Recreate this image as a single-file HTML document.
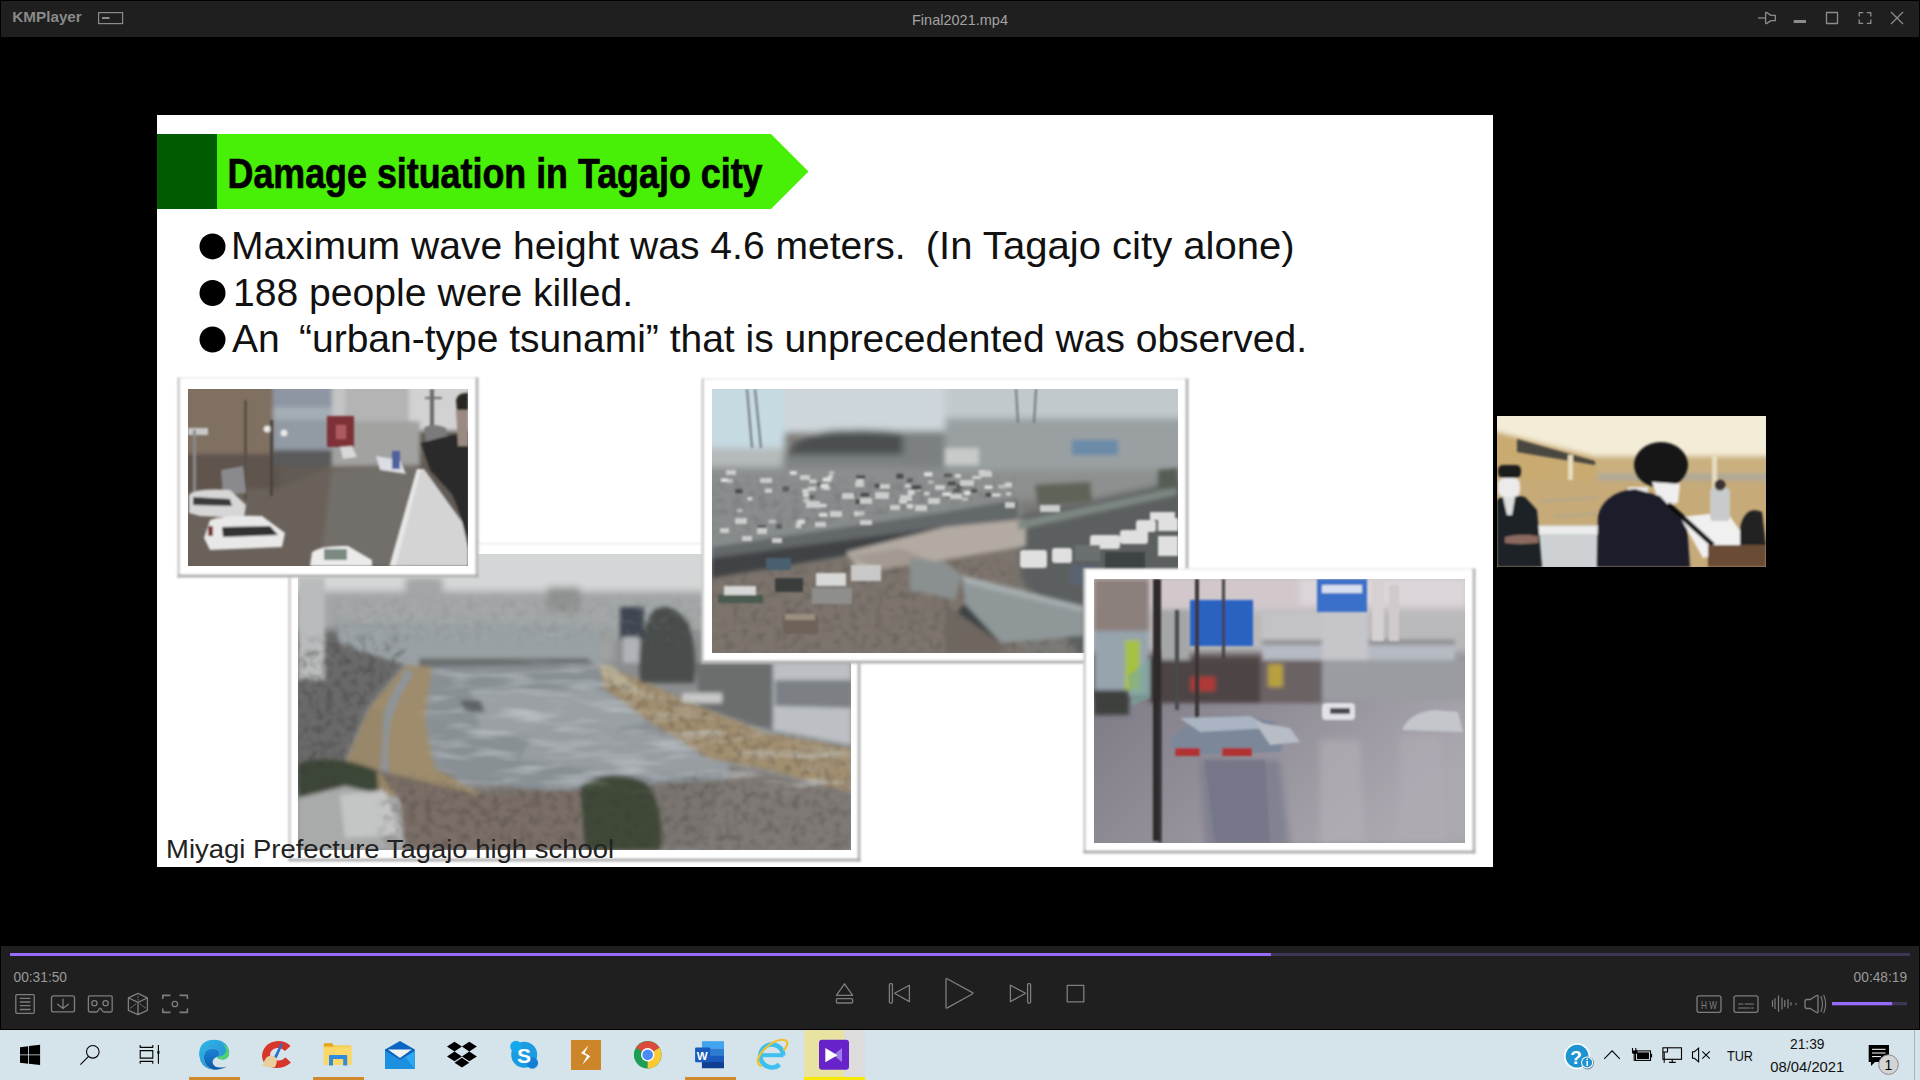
<!DOCTYPE html>
<html><head><meta charset="utf-8">
<style>
*{margin:0;padding:0;box-sizing:border-box}
html,body{width:1920px;height:1080px;overflow:hidden;background:#000;font-family:"Liberation Sans",sans-serif}
.a{position:absolute}
#titlebar{left:1px;top:1px;width:1918px;height:36px;background:#1f1f1f}
#ctrl{left:1px;top:946px;width:1918px;height:83px;background:#1f1f1f}
#task{left:0;top:1030px;width:1920px;height:50px;background:#d5e4ea}
#slide{left:157px;top:115px;width:1336px;height:752px;background:#fff;overflow:hidden}

</style></head>
<body>
<!-- title bar -->
<div id="titlebar" class="a"></div>
<svg class="a" style="left:0;top:0" width="1920" height="37">
<text x="12.3" y="22" font-family="Liberation Sans" font-weight="bold" font-size="15" fill="#8a8a8a" textLength="69.5" lengthAdjust="spacingAndGlyphs">KMPlayer</text>
<rect x="98.6" y="12.6" width="24" height="11" fill="none" stroke="#8a8a8a" stroke-width="1.2"/>
<rect x="102" y="17" width="7.5" height="2" fill="#8a8a8a"/>
<text x="912" y="25" font-family="Liberation Sans" font-size="14.5" fill="#a3a3a3" textLength="96" lengthAdjust="spacingAndGlyphs">Final2021.mp4</text>
<g fill="none" stroke="#8c8c8c" stroke-width="1.3" stroke-linejoin="round">
<path d="M1758,18 H1765.2"/>
<path d="M1765.6,13.2 Q1765.6,12 1766.8,12.6 L1771,15.4 H1775.3 V20.6 H1771 L1766.8,23.4 Q1765.6,24 1765.6,22.8 Z"/>
<rect x="1826.5" y="12.5" width="11" height="11"/>
<path d="M1859.2,16.5 V12.6 H1863.2 M1866.8,12.6 H1870.8 V16.5 M1870.8,19.5 V23.4 H1866.8 M1863.2,23.4 H1859.2 V19.5"/>
<path d="M1891,12 L1903,24 M1903,12 L1891,24"/>
</g>
<rect x="1793.7" y="20" width="12.3" height="3" fill="#8c8c8c"/>
</svg>
<!-- slide -->
<div id="slide" class="a">
<svg class="a" style="left:0;top:0" width="1336" height="752" viewBox="0 0 1336 752">
<rect x="0" y="19" width="60" height="75" fill="#005c00"/>
<polygon points="60,19 614,19 651.5,56.5 614,94 60,94" fill="#48ef06"/>
<text id="ttl" x="70.5" y="73.4" font-family="Liberation Sans" font-weight="bold" font-size="42" fill="#000" stroke="#000" stroke-width="0.7" textLength="535" lengthAdjust="spacingAndGlyphs">Damage situation in Tagajo city</text>
<circle cx="55.5" cy="131.4" r="13" fill="#000"/>
<circle cx="55.5" cy="178" r="13" fill="#000"/>
<circle cx="55.5" cy="224.5" r="13" fill="#000"/>
<g font-family="Liberation Sans" font-size="39" fill="#111">
<text id="l1a" x="74" y="144.3" textLength="674.6" lengthAdjust="spacingAndGlyphs">Maximum wave height was 4.6 meters.</text>
<text id="l1b" x="768.7" y="144.3" textLength="369" lengthAdjust="spacingAndGlyphs">(In Tagajo city alone)</text>
<text id="l2" x="76" y="191" textLength="400" lengthAdjust="spacingAndGlyphs">188 people were killed.</text>
<text id="l3a" x="75" y="237">An</text><text id="l3b" x="142" y="237" textLength="1008" lengthAdjust="spacingAndGlyphs">“urban-type tsunami” that is unprecedented was observed.</text>
</g>
</svg>
</div>

<!-- PHOTOLAYER -->
<svg class="a" style="left:157px;top:115px" width="1336" height="752" viewBox="157 115 1336 752">
<defs>
<filter id="fb" x="-5%" y="-5%" width="110%" height="110%"><feGaussianBlur stdDeviation="0.8"/></filter>
<filter id="b1" x="-20%" y="-20%" width="140%" height="140%"><feGaussianBlur stdDeviation="1"/></filter>
<filter id="b2" x="-20%" y="-20%" width="140%" height="140%"><feGaussianBlur stdDeviation="2"/></filter>
<filter id="b3" x="-20%" y="-20%" width="140%" height="140%"><feGaussianBlur stdDeviation="3.5"/></filter>
<filter id="texd" x="-10%" y="-10%" width="120%" height="120%" color-interpolation-filters="sRGB"><feTurbulence type="fractalNoise" baseFrequency="0.12" numOctaves="3" seed="4" result="n"/><feColorMatrix in="n" type="matrix" values="0 0 0 0 0.2  0 0 0 0 0.19  0 0 0 0 0.18  -1.0 0 0 0 0.56" result="c"/><feGaussianBlur in="SourceAlpha" stdDeviation="5" result="m"/><feComposite in="c" in2="m" operator="in"/><feGaussianBlur stdDeviation="1.1"/></filter>
<filter id="texl" x="-10%" y="-10%" width="120%" height="120%" color-interpolation-filters="sRGB"><feTurbulence type="fractalNoise" baseFrequency="0.02 0.1" numOctaves="2" seed="7" result="n"/><feColorMatrix in="n" type="matrix" values="0 0 0 0 0.8  0 0 0 0 0.82  0 0 0 0 0.84  1.6 0 0 0 -0.75" result="c"/><feGaussianBlur in="SourceAlpha" stdDeviation="6" result="m"/><feComposite in="c" in2="m" operator="in"/><feGaussianBlur stdDeviation="1.2"/></filter>
<filter id="texm" x="-10%" y="-10%" width="120%" height="120%" color-interpolation-filters="sRGB"><feTurbulence type="fractalNoise" baseFrequency="0.16" numOctaves="3" seed="11" result="n"/><feColorMatrix in="n" type="matrix" values="0 0 0 0 0.85  0 0 0 0 0.85  0 0 0 0 0.85  1.0 0 0 0 -0.5" result="c"/><feGaussianBlur in="SourceAlpha" stdDeviation="5" result="m"/><feComposite in="c" in2="m" operator="in"/><feGaussianBlur stdDeviation="1.1"/></filter>
<clipPath id="c1"><rect x="188" y="389" width="280" height="177"/></clipPath>
<clipPath id="c2"><rect x="298" y="554" width="553" height="296"/></clipPath>
<clipPath id="c3"><rect x="712" y="389" width="466" height="264"/></clipPath>
<clipPath id="c4"><rect x="1094" y="579" width="371" height="264"/></clipPath>
</defs>
<!-- frame 2 -->
<g filter="url(#fb)">
<rect x="288.5" y="543" width="572.0" height="318.5" fill="#fff"/>
<rect x="288.5" y="543" width="572.0" height="1.2" fill="#e4e4e4"/>
<rect x="288.5" y="543" width="2.2" height="318.5" fill="#c2c2c2"/>
<rect x="857.5" y="543" width="3" height="318.5" fill="#b6b6b6"/>
<rect x="288.5" y="858.5" width="572.0" height="3" fill="#aeaeae"/>
</g>
<g clip-path="url(#c2)">
<rect x="298" y="554" width="553" height="296" fill="#8e9294"/>
<g filter="url(#b3)">
<rect x="290" y="548" width="570" height="48" fill="#d4d7d7"/>
<rect x="290" y="591" width="570" height="40" fill="#a2a6a6"/>
<rect x="405" y="577" width="38" height="37" fill="#a3a6a6"/>
<rect x="547" y="587" width="33" height="25" fill="#909292"/>
<path d="M335,623 L600,625 L700,640 L700,662 L335,662 Z" fill="#9da1a1"/>
<path d="M290,629 L420,630 L405,665 L369,708 L348,756 L340,790 L290,790 Z" fill="#6a6b6b"/>
<path d="M615,640 L851,640 L851,745 L730,721 L615,690 Z" fill="#8b8d8f"/>
<path d="M420,850 L420,770 L560,790 L720,760 L851,800 L851,850 Z" fill="#7a7470"/>
</g>
<g filter="url(#b2)">
<rect x="298" y="577" width="27" height="103" fill="#b9bcbc"/>
<path d="M335,625 L600,626 L600,667 L432,667 L406,665 L340,645 Z" fill="#9aa1a4"/>
<path d="M419,658 L586,658 L600,667 L419,667 Z" fill="#6c6e70"/>
<path d="M430,667 L600,664 L620,690 L730,722 L851,752 L851,800 L720,780 L560,790 L460,784 L433,755 L425,712 Z" fill="#899094"/>
<path d="M470,690 L600,690 L660,720 L560,740 L480,730 Z" fill="#9aa0a4"/>
<path d="M540,720 L700,740 L760,770 L640,775 L520,760 Z" fill="#979da1"/>
<path d="M460,700 L480,700 L485,712 L465,712 Z" fill="#5e6468"/>
<path d="M405.6,665 L432,667 L425,720 L434.5,768.5 L480,793 L480,800 L377,795 L340.6,786 L347.8,756.5 L369.5,708 Z" fill="#9e8c6c"/>
<path d="M410,671 Q392,700 386.5,720 Q382,748 384.5,770 Q390,785 405,793" fill="none" stroke="#8c949c" stroke-width="8"/>
<path d="M369.5,708 L384,712 L381,770 L347.8,762 Z" fill="#988769"/>
<path d="M600,664 L640,680 L700,707 L767,733 L851,748 L851,792 L767,770 L708,758 L650,722 L604,688 Z" fill="#a28f6f"/>
<path d="M600,664 L612,666 L640,690 L660,700 L625,692 L602,676 Z" fill="#b9ae94"/>
<path d="M773,663 L851,663 L851,745 L773,730 Z" fill="#bcc0c4"/><path d="M695,663 L773,663 L773,732 L700,706 Z" fill="#6c6e6e"/>
<path d="M775,680 L851,680 L851,708 L775,706 Z" fill="#7c8084"/><rect x="682" y="693" width="40" height="10" fill="#c8c8c8"/>
<rect x="620" y="607" width="24" height="33" fill="#3f4652"/>
<path d="M640,683 Q636,640 652,612 Q668,598 688,622 Q698,650 694,683 Z" fill="#4a4e4c"/><rect x="623" y="637" width="16" height="26" fill="#b0b4b8"/>
<path d="M298,764 Q330,752 377,770 L380,807 L298,810 Z" fill="#3c4637"/>
<path d="M298,798 L345,786 L405.6,800 L405.6,850 L298,850 Z" fill="#a9aaaa"/>
<path d="M340,795 L385,790 L400,835 L345,838 Z" fill="#c4c5c5"/>
<path d="M377,770 L480,795 L580,790 L580,850 L405,850 L400,800 Z" fill="#7a6e66"/>
<path d="M730,765 L851,792 L851,850 L700,850 Z" fill="#807a76"/>
<path d="M580,785 Q612,768 645,782 Q665,805 660,850 L585,850 Z" fill="#3f4a39"/>
</g>
<path d="M430,667 L600,664 L620,690 L730,722 L851,752 L851,800 L720,780 L560,790 L460,784 L433,755 L425,712 Z" fill="#fff" filter="url(#texl)"/>
<rect x="330" y="598" width="521" height="44" fill="#000" filter="url(#texd)" opacity="0.2"/>
<rect x="330" y="598" width="521" height="44" fill="#fff" filter="url(#texm)" opacity="0.3"/>
<path d="M298,640 L410,640 L400,665 L365,708 L345,756 L338,785 L298,785 Z" fill="#000" filter="url(#texd)"/>
<path d="M380,775 L560,790 L720,775 L851,795 L851,850 L380,850 Z" fill="#000" filter="url(#texd)" opacity="0.75"/>
<path d="M600,668 L700,707 L767,733 L851,748 L851,792 L767,770 L708,758 L650,722 L604,688 Z" fill="#000" filter="url(#texd)" opacity="0.7"/>

</g>
<!-- frame 1 -->
<g filter="url(#fb)">
<rect x="177.5" y="377.5" width="301.0" height="200.0" fill="#fff"/>
<rect x="177.5" y="377.5" width="301.0" height="1.2" fill="#e4e4e4"/>
<rect x="177.5" y="377.5" width="2.2" height="200.0" fill="#c2c2c2"/>
<rect x="475.5" y="377.5" width="3" height="200.0" fill="#b6b6b6"/>
<rect x="177.5" y="574.5" width="301.0" height="3" fill="#aeaeae"/>
</g>
<g clip-path="url(#c1)">
<rect x="188" y="389" width="280" height="177" fill="#625b55"/>
<g filter="url(#b2)">
<rect x="330" y="385" width="140" height="40" fill="#c4c4c4"/>
<rect x="345" y="385" width="64" height="44" fill="#b4b4b4"/>
<rect x="409" y="385" width="60" height="46" fill="#d2d2d2"/>
<rect x="330" y="421" width="90" height="48" fill="#a2a2a0"/>
<rect x="185" y="385" width="88" height="75" fill="#807062"/>
<rect x="185" y="454" width="95" height="37" fill="#5f554e"/>
<rect x="273" y="385" width="59" height="22" fill="#8e96a4"/>
<rect x="273" y="407" width="59" height="13" fill="#a4acb4"/>
<rect x="273" y="420" width="59" height="33" fill="#929aa4"/>
<rect x="273" y="450" width="59" height="16" fill="#5a5a5a"/>
<path d="M188,491 L280,488 L332,466 L420,465 L412,566 L188,566 Z" fill="#6a625a"/>
<path d="M332,470 L420,465 L408,566 L320,566 Z" fill="#726e69"/>
</g>
<g filter="url(#b1)">
<rect x="327" y="416" width="27" height="31" fill="#7e3038"/>
<rect x="336" y="425" width="10" height="14" fill="#b05a60"/>
<rect x="270" y="420" width="3" height="76" fill="#4a4440"/>
<rect x="244" y="400" width="3" height="100" fill="#5a504a"/>
<circle cx="267" cy="429" r="3.5" fill="#e8e8e8"/><circle cx="284" cy="433" r="3.5" fill="#e8e8e8"/>
<rect x="188" y="428" width="20" height="7" fill="#c8c8c8"/>
<rect x="193" y="430" width="3" height="75" fill="#8a8a8a"/>
<path d="M221,470 L243,466 L246,493 L223,495 Z" fill="#8a8a8e"/>
<path d="M189,495 Q195,488 230,490 L246,505 L244,518 L200,516 L189,513 Z" fill="#d6d6d6"/>
<path d="M193,497 L230,499 L232,506 L193,505 Z" fill="#3a3a3a"/>
<path d="M210,520 Q225,515 262,516 L285,533 L282,547 L210,550 L204,538 Z" fill="#e8e8e8"/>
<path d="M222,527 L270,526 L278,535 L223,537 Z" fill="#333"/>
<rect x="208" y="526" width="5" height="10" fill="#7a3030"/>
<path d="M312,552 Q322,545 348,546 L372,560 L372,566 L310,566 Z" fill="#ebebeb"/>
<rect x="324" y="549" width="23" height="11" fill="#7a8a80"/>
<path d="M340,447 L352,446 L357,457 L343,459 Z" fill="#d8d8d8"/>
<path d="M376,456 L400,460 L406,474 L380,470 Z" fill="#dcdce4"/>
<rect x="392" y="451" width="8" height="18" fill="#5060a0"/>
<path d="M389.6,566 L417,469 L424,469 L468,530 L468,566 Z" fill="#d4d4d4"/>
<path d="M389.6,566 L417,469 L421,469 L396,566 Z" fill="#e6e6e6"/>
<rect x="430" y="389" width="4" height="50" fill="#6a6a6a"/>
<path d="M425,398 L442,398" stroke="#6a6a6a" stroke-width="2"/>
<path d="M424,428 Q432,422 446,428 L450,456 L428,458 Z" fill="#7a7a7a"/>
<path d="M421,443 Q445,436 468,432 L468,548 Q462,515 452,494 L430,470 Z" fill="#29292c"/>
<path d="M456,400 Q458,392 468,393 L468,412 L457,412 Z" fill="#2a2624"/>
<path d="M456,410 L468,410 L468,446 L458,446 Z" fill="#9a8a82"/>
</g>

</g>
<!-- frame 3 -->
<g filter="url(#fb)">
<rect x="701.5" y="378.5" width="487.0" height="285.0" fill="#fff"/>
<rect x="701.5" y="378.5" width="487.0" height="1.2" fill="#e4e4e4"/>
<rect x="701.5" y="378.5" width="2.2" height="285.0" fill="#c2c2c2"/>
<rect x="1185.5" y="378.5" width="3" height="285.0" fill="#b6b6b6"/>
<rect x="701.5" y="660.5" width="487.0" height="3" fill="#aeaeae"/>
</g>
<g clip-path="url(#c3)">
<rect x="712" y="389" width="466" height="264" fill="#7c7a76"/>
<g filter="url(#b3)">
<rect x="705" y="383" width="480" height="50" fill="#cdd6da"/>
<rect x="705" y="383" width="80" height="65" fill="#c6dae2"/>
<rect x="945" y="383" width="240" height="40" fill="#c2c9cc"/>
<rect x="705" y="448" width="80" height="35" fill="#b5b9b9"/>
<path d="M783,462 Q795,428 850,430 Q900,428 945,440 L945,458 L783,458 Z" fill="#4b4f4f"/><rect x="783" y="455" width="162" height="15" fill="#7e8282"/>
<rect x="903" y="431" width="45" height="35" fill="#7c8080"/>
<rect x="945" y="418" width="240" height="55" fill="#9aa0a2"/>
<path d="M705,467 L945,467 L945,482 L705,482 Z" fill="#8a8e8e"/>
<path d="M705,482 L1020,482 L1020,545 L705,560 Z" fill="#898d8d"/>
<path d="M945,470 L1185,470 L1185,500 L945,500 Z" fill="#8c908e"/>
<path d="M1018,516 L1185,480 L1185,660 L1084,660 L1018,575 Z" fill="#5b5f61"/>
<path d="M705,565 L1020,545 L1020,660 L705,660 Z" fill="#7d756d"/>
</g>
<path d="M712,575 L850,562 L1000,560 L1084,620 L1084,653 L712,653 Z" fill="#000" filter="url(#texd)" opacity="0.6"/>
<path d="M712,480 L1015,480 L1015,500 L712,540 Z" fill="#000" filter="url(#texd)" opacity="0.4"/>
<g filter="url(#b2)">
<path d="M712,543 L944,508 L1018,495 L1018,521 L944,527 L712,562 Z" fill="#64686a"/><path d="M712,543 L944,508 L1018,495 L1018,499 L944,512 L712,547 Z" fill="#8a8e90"/>
<path d="M712,558 L944,527 L1018,522 L1018,530 L850,555 L712,578 Z" fill="#3f4345"/>
<path d="M846,552 L945,527 L1026,519 L1026,546 L944,560 L860,572 Z" fill="#b3aba3"/>
<path d="M850,556 L900,548 L930,560 L880,570 Z" fill="#a39a92"/>
<path d="M1018,521 L1177,487 L1177,495 L1018,530 Z" fill="#7e8882"/>
<path d="M1035,485 L1090,482 L1092,502 L1038,506 Z" fill="#5f6358"/>
<path d="M1158,470 L1178,468 L1178,488 L1158,490 Z" fill="#575d55"/>
<rect x="945" y="448" width="34" height="17" fill="#c8c9c9"/>
<rect x="1072" y="440" width="46" height="15" fill="#6b8aa8"/>
<path d="M962,575 L1084,609 L1084,636 L1001,643 L965,604 Z" fill="#8f9799"/>
<path d="M962,575 L1084,606 L1084,612 L965,583 Z" fill="#a7aeb0"/>
<path d="M965,604 L1001,643 L985,650 L955,615 Z" fill="#3e4244"/>
<path d="M945,604 L1001,643 L1001,653 L945,653 Z" fill="#6e665e"/>
<path d="M910,558 L945,562 L962,575 L955,600 L910,590 Z" fill="#8a9090"/>
</g>
<g filter="url(#b1)">
<path d="M747,389 L752,448 M755,389 L761,448 M1016,389 L1018,423 M1036,389 L1034,423" stroke="#6e767a" stroke-width="2"/>
<g><rect x="899.1" y="498.8" width="7.8" height="4.7" fill="#d8d8d8"/><rect x="907.7" y="489.9" width="6.9" height="4.9" fill="#d8d8d8"/><rect x="906.8" y="503.9" width="6.5" height="4.7" fill="#d4d4d4"/><rect x="827.9" y="475.0" width="5.1" height="3.4" fill="#cfcfcf"/><rect x="798.2" y="519.5" width="6.6" height="4.5" fill="#d8d8d8"/><rect x="737.1" y="509.1" width="5.5" height="3.0" fill="#bfc0c0"/><rect x="972.2" y="475.8" width="8.8" height="3.3" fill="#cfcfcf"/><rect x="764.9" y="488.5" width="7.2" height="4.4" fill="#cfcfcf"/><rect x="776.2" y="523.9" width="5.8" height="4.9" fill="#5a5c5e"/><rect x="828.7" y="471.1" width="5.7" height="3.3" fill="#bfc0c0"/><rect x="735.2" y="489.1" width="7.3" height="4.2" fill="#4a4c4e"/><rect x="924.1" y="472.3" width="8.3" height="4.0" fill="#e0e0e0"/><rect x="808.8" y="495.2" width="5.7" height="3.5" fill="#5a5c5e"/><rect x="992.1" y="493.5" width="8.4" height="3.0" fill="#e0e0e0"/><rect x="947.6" y="481.5" width="8.4" height="3.9" fill="#4a4c4e"/><rect x="924.1" y="491.8" width="5.5" height="3.5" fill="#cfcfcf"/><rect x="956.9" y="483.9" width="6.4" height="4.0" fill="#4a4c4e"/><rect x="944.0" y="473.5" width="8.1" height="3.7" fill="#5a5c5e"/><rect x="803.0" y="493.1" width="5.8" height="4.0" fill="#d4d4d4"/><rect x="822.6" y="477.5" width="8.7" height="4.1" fill="#e0e0e0"/><rect x="807.9" y="486.6" width="8.2" height="4.3" fill="#cfcfcf"/><rect x="928.0" y="480.6" width="5.6" height="3.1" fill="#bfc0c0"/><rect x="1006.1" y="482.1" width="5.1" height="4.5" fill="#bfc0c0"/><rect x="817.1" y="482.8" width="6.7" height="3.1" fill="#5a5c5e"/><rect x="985.3" y="470.8" width="6.3" height="3.4" fill="#bfc0c0"/><rect x="1004.5" y="482.9" width="7.5" height="4.6" fill="#cfcfcf"/><rect x="747.3" y="496.8" width="5.2" height="3.8" fill="#cfcfcf"/><rect x="757.5" y="525.4" width="8.4" height="5.0" fill="#4a4c4e"/><rect x="849.3" y="492.6" width="6.3" height="3.5" fill="#5a5c5e"/><rect x="854.2" y="511.1" width="6.5" height="5.0" fill="#d4d4d4"/><rect x="998.2" y="484.9" width="8.5" height="3.4" fill="#bfc0c0"/><rect x="860.6" y="493.0" width="8.5" height="3.7" fill="#4a4c4e"/><rect x="947.1" y="494.4" width="7.3" height="3.1" fill="#5a5c5e"/><rect x="805.9" y="499.6" width="6.1" height="4.0" fill="#5a5c5e"/><rect x="942.3" y="492.3" width="8.8" height="3.7" fill="#e0e0e0"/><rect x="768.5" y="519.8" width="7.2" height="3.5" fill="#bfc0c0"/><rect x="913.5" y="486.9" width="7.0" height="4.3" fill="#d8d8d8"/><rect x="820.8" y="483.9" width="8.0" height="4.7" fill="#e0e0e0"/><rect x="818.9" y="512.9" width="8.5" height="3.9" fill="#d8d8d8"/><rect x="823.1" y="486.8" width="7.1" height="3.3" fill="#cfcfcf"/><rect x="962.0" y="497.5" width="6.1" height="3.2" fill="#bfc0c0"/><rect x="913.2" y="485.3" width="8.1" height="4.2" fill="#4a4c4e"/><rect x="911.7" y="485.5" width="7.2" height="4.7" fill="#4a4c4e"/><rect x="795.6" y="524.2" width="5.6" height="3.9" fill="#cfcfcf"/><rect x="907.1" y="478.2" width="5.7" height="4.4" fill="#5a5c5e"/><rect x="1006.0" y="492.2" width="5.2" height="3.3" fill="#cfcfcf"/><rect x="809.3" y="479.5" width="7.2" height="3.8" fill="#cfcfcf"/><rect x="819.2" y="503.7" width="7.4" height="3.5" fill="#d4d4d4"/><rect x="981.5" y="470.0" width="8.8" height="4.7" fill="#bfc0c0"/><rect x="970.7" y="489.3" width="6.5" height="3.1" fill="#4a4c4e"/><rect x="896.4" y="473.7" width="7.1" height="4.9" fill="#4a4c4e"/><rect x="802.2" y="488.8" width="6.7" height="4.6" fill="#cfcfcf"/><rect x="904.8" y="484.0" width="5.6" height="3.8" fill="#cfcfcf"/><rect x="856.2" y="479.0" width="7.4" height="3.7" fill="#cfcfcf"/><rect x="978.7" y="470.0" width="6.3" height="4.8" fill="#d4d4d4"/><rect x="874.6" y="483.8" width="6.5" height="3.9" fill="#4a4c4e"/><rect x="782.5" y="486.4" width="6.5" height="4.9" fill="#5a5c5e"/><rect x="984.6" y="485.4" width="8.0" height="3.6" fill="#e0e0e0"/><rect x="789.8" y="471.1" width="7.0" height="3.6" fill="#e0e0e0"/><rect x="856.2" y="475.5" width="8.8" height="3.5" fill="#4a4c4e"/><rect x="727.8" y="478.8" width="5.1" height="4.1" fill="#bfc0c0"/><rect x="796.5" y="520.7" width="5.1" height="4.0" fill="#d8d8d8"/><rect x="964.1" y="490.9" width="6.2" height="4.2" fill="#e0e0e0"/><rect x="855.5" y="499.2" width="8.5" height="4.8" fill="#4a4c4e"/><rect x="720.8" y="478.3" width="7.1" height="3.7" fill="#e0e0e0"/><rect x="803.3" y="498.2" width="6.4" height="4.4" fill="#bfc0c0"/><rect x="954.9" y="474.0" width="6.0" height="3.9" fill="#d4d4d4"/><rect x="985.5" y="492.9" width="5.8" height="3.9" fill="#4a4c4e"/><rect x="953.4" y="488.2" width="7.8" height="4.3" fill="#5a5c5e"/><rect x="857.7" y="511.0" width="6.9" height="4.4" fill="#bfc0c0"/></g>
<g fill="#cbcccc">
<rect x="806" y="501" width="14" height="7"/><rect x="830" y="511" width="12" height="6"/><rect x="842" y="493" width="12" height="6"/><rect x="860" y="498" width="12" height="6"/><rect x="875" y="492" width="14" height="7"/><rect x="890" y="505" width="10" height="5"/><rect x="900" y="495" width="12" height="6"/><rect x="915" y="505" width="12" height="6"/><rect x="928" y="498" width="12" height="6"/><rect x="935" y="485" width="10" height="5"/><rect x="880" y="484" width="10" height="5"/><rect x="855" y="482" width="9" height="5"/>
<rect x="735" y="518" width="12" height="6"/><rect x="757" y="528" width="10" height="6"/><rect x="742" y="536" width="10" height="5"/><rect x="772" y="538" width="10" height="5"/><rect x="815" y="522" width="11" height="5"/><rect x="860" y="520" width="12" height="5"/><rect x="720" y="528" width="9" height="5"/>
<rect x="726" y="470" width="10" height="5"/><rect x="760" y="478" width="12" height="5"/><rect x="800" y="475" width="10" height="5"/><rect x="960" y="480" width="14" height="6"/><rect x="980" y="472" width="12" height="5"/><rect x="950" y="494" width="12" height="5"/><rect x="1005" y="502" width="10" height="6"/><rect x="1040" y="505" width="20" height="7"/>
</g>
<g fill="#e0e0e0">
<rect x="1020" y="550" width="27" height="18" rx="3"/><rect x="1052" y="548" width="20" height="15" rx="3"/><rect x="1090" y="535" width="30" height="14" rx="3"/><rect x="1120" y="530" width="28" height="14" rx="3"/><rect x="1136" y="520" width="20" height="12" rx="3"/><rect x="1158" y="518" width="20" height="13"/><rect x="1158" y="536" width="20" height="20"/><rect x="1150" y="512" width="25" height="8"/>
</g>
<rect x="1075" y="545" width="25" height="16" fill="#6a7070"/>
<rect x="1105" y="552" width="40" height="20" fill="#3e4244"/>
<rect x="1070" y="565" width="30" height="20" fill="#5a6470"/>
<rect x="724" y="586" width="32" height="13" fill="#d6d7d6"/>
<rect x="718" y="595" width="45" height="8" fill="#4a5a50"/>
<rect x="816" y="573" width="30" height="13" fill="#d8d8d8"/>
<rect x="812" y="588" width="40" height="16" fill="#8e8e8c"/>
<rect x="851" y="565" width="30" height="16" fill="#c8c8c8"/>
<rect x="775" y="578" width="28" height="14" fill="#3a3c3e"/>
<rect x="766" y="558" width="25" height="12" fill="#4a6070"/>
<rect x="783" y="616" width="35" height="18" fill="#6e6258"/>
<rect x="785" y="614" width="30" height="6" fill="#9a8e80"/>
</g>

</g>
<!-- frame 4 -->
<g filter="url(#fb)">
<rect x="1083.5" y="568.5" width="392.0" height="285.0" fill="#fff"/>
<rect x="1083.5" y="568.5" width="392.0" height="1.2" fill="#e4e4e4"/>
<rect x="1083.5" y="568.5" width="2.2" height="285.0" fill="#c2c2c2"/>
<rect x="1472.5" y="568.5" width="3" height="285.0" fill="#b6b6b6"/>
<rect x="1083.5" y="850.5" width="392.0" height="3" fill="#aeaeae"/>
</g>
<g clip-path="url(#c4)">
<defs><linearGradient id="w4" x1="0" y1="0" x2="1" y2="0.4"><stop offset="0" stop-color="#7e7b86"/><stop offset="0.45" stop-color="#918e98"/><stop offset="1" stop-color="#aca8b0"/></linearGradient></defs>
<rect x="1094" y="579" width="371" height="264" fill="#8c8890"/>
<g filter="url(#b3)">
<rect x="1090" y="575" width="380" height="40" fill="#d2c8cc"/>
<rect x="1300" y="575" width="170" height="30" fill="#dcd6da"/>
<rect x="1090" y="610" width="380" height="50" fill="#b9b9bb"/>
<rect x="1090" y="652" width="232" height="50" fill="#5a5050"/><rect x="1322" y="652" width="148" height="48" fill="#96969c"/>
<path d="M1090,698 L1470,695 L1470,845 L1090,845 Z" fill="url(#w4)"/>
<path d="M1200,760 L1280,760 L1290,845 L1205,845 Z" fill="#76788a" opacity="0.7"/>
<path d="M1320,740 L1360,740 L1365,845 L1320,845 Z" fill="#b4b0b8" opacity="0.6"/>
<path d="M1400,735 L1440,735 L1445,845 L1400,845 Z" fill="#b0acb4" opacity="0.6"/>
</g>
<g filter="url(#b2)">
<rect x="1094" y="579" width="55" height="52" fill="#8c807c"/>
<rect x="1094" y="631" width="55" height="65" fill="#97a3ad"/>
<rect x="1094" y="690" width="35" height="25" fill="#3c3f3c"/>
<rect x="1125" y="640" width="15" height="50" fill="#a5c143"/>
<rect x="1160" y="610" width="30" height="85" fill="#a4a6a8"/>
<rect x="1262" y="612" width="60" height="40" fill="#c3c3c5"/>
<rect x="1325" y="612" width="40" height="55" fill="#b6b6b8"/>
<rect x="1262" y="645" width="193" height="15" fill="#b6bac2"/><rect x="1262" y="640" width="193" height="5" fill="#6a6a70" opacity="0.6"/>
<rect x="1150" y="660" width="110" height="43" fill="#4e4444"/><rect x="1260" y="660" width="62" height="43" fill="#6a6264"/>
<rect x="1268" y="664" width="15" height="23" fill="#b8a040"/>
<rect x="1191" y="677" width="24" height="14" fill="#b03838"/>
<rect x="1322" y="660" width="143" height="40" fill="#9a9ca2"/><rect x="1322" y="608" width="46" height="52" fill="#c6c6ca"/>
</g>
<g filter="url(#b1)">
<rect x="1190" y="600" width="63" height="46" fill="#2c62c2"/>
<rect x="1317" y="579" width="50" height="33" fill="#3a6fc8"/>
<rect x="1322" y="585" width="40" height="8" fill="#d8e0f0"/>
<rect x="1372" y="579" width="12" height="62" fill="#d6d0d0"/>
<rect x="1389" y="585" width="10" height="56" fill="#d0cacc"/>
<rect x="1153" y="579" width="8" height="262" fill="#2e2a2a"/><path d="M1128,676 L1150,658 L1150,698 L1132,706 Z" fill="#7aa89c" opacity="0.6"/>
<rect x="1195" y="579" width="4" height="140" fill="#3a3636"/>
<rect x="1222" y="579" width="3" height="80" fill="#404040"/>
<rect x="1175" y="610" width="4" height="100" fill="#4a4848"/>
<path d="M1170,740 Q1190,715 1240,715 L1275,722 L1285,740 L1280,752 L1175,755 Z" fill="#7b879a"/>
<path d="M1180,718 L1250,716 L1272,728 L1200,732 Z" fill="#aab4c2"/>
<rect x="1175" y="748" width="25" height="8" fill="#b03030"/>
<rect x="1222" y="748" width="30" height="8" fill="#b03030"/>
<path d="M1255,722 L1290,728 L1300,742 L1270,745 Z" fill="#b8bcc4"/>
<path d="M1402,730 Q1410,712 1435,710 L1458,712 L1463,732 Z" fill="#c4c6cc"/>
<rect x="1322" y="703" width="33" height="17" rx="4" fill="#e2e2e6"/>
<rect x="1330" y="708" width="20" height="6" fill="#4a4a50"/>
<path d="M1205,760 L1265,760 L1270,843 L1215,843 Z" fill="#6e7084" opacity="0.6"/>
<rect x="1158" y="700" width="4" height="143" fill="#3a383c" opacity="0.7"/>
</g>

</g>
<text x="166.1" y="857.75" font-family="Liberation Sans" font-size="25" fill="#222" textLength="448" lengthAdjust="spacingAndGlyphs">Miyagi Prefecture Tagajo high school</text>
</svg>

<!-- webcam -->
<svg class="a" style="left:1497px;top:416px" width="269" height="151" viewBox="1497 416 269 151">
<defs><filter id="cb1" x="-20%" y="-20%" width="140%" height="140%"><feGaussianBlur stdDeviation="1"/></filter>
<filter id="cb3" x="-20%" y="-20%" width="140%" height="140%"><feGaussianBlur stdDeviation="2.5"/></filter></defs>
<rect x="1497" y="416" width="269" height="151" fill="#c6aa78"/>
<g filter="url(#cb3)">
<rect x="1490" y="410" width="280" height="50" fill="#f3ecd6"/>
<path d="M1490,430 L1597,457 L1597,480 L1490,480 Z" fill="#c9aa70"/>
<rect x="1597" y="456" width="175" height="20" fill="#c9b07e"/>
<rect x="1597" y="474" width="175" height="14" fill="#aba99e"/>
<rect x="1490" y="480" width="280" height="47" fill="#c6aa78"/>
<rect x="1535" y="527" width="65" height="45" fill="#cdd1d4"/>
</g>
<g filter="url(#cb1)">
<path d="M1517,439 L1595,461 L1595,465 L1517,452 Z" fill="#4a4640"/>
<rect x="1568" y="455" width="5" height="25" fill="#e6dcc0"/>
<rect x="1712" y="455" width="5" height="35" fill="#e6dcc0"/>
<path d="M1540,500 L1597,496 L1597,499 L1540,503 Z" fill="#b8a888"/>
<path d="M1555,515 L1597,512 L1597,515 L1555,518 Z" fill="#b8a888"/>
<rect x="1535" y="526" width="65" height="8" fill="#ececec"/>
<path d="M1497,500 Q1505,493 1525,497 L1537,510 L1542,567 L1497,567 Z" fill="#1e2028"/>
<rect x="1498" y="465" width="23" height="13" rx="5" fill="#1a1a1a"/>
<rect x="1498" y="478" width="22" height="19" rx="6" fill="#ebebeb"/>
<path d="M1503,497 L1515,497 L1512,515 L1507,515 Z" fill="#dedede"/>
<path d="M1505,537 Q1520,533 1538,536 L1538,543 Q1520,545 1505,543 Z" fill="#8a6a60"/>
<ellipse cx="1661" cy="465" rx="27" ry="23" fill="#181818"/>
<path d="M1652,482 L1680,484 L1678,503 L1660,505 Z" fill="#efefef"/>
<path d="M1628,487 L1648,487 L1648,510 L1632,510 Z" fill="#e8e8e8"/>
<path d="M1597,567 L1598,515 Q1605,492 1635,489 L1660,496 L1687,525 L1690,567 Z" fill="#1c1e2c"/>
<path d="M1680,517 L1727,512 L1750,545 L1703,558 Z" fill="#f0f0f0"/>
<path d="M1668,504 L1713,545" stroke="#111" stroke-width="5"/>
<rect x="1710" y="488" width="20" height="33" rx="4" fill="#c8cbcb"/>
<circle cx="1720" cy="485" r="5.5" fill="#3a3030"/>
<path d="M1740,528 Q1745,505 1762,512 L1766,545 L1740,545 Z" fill="#222"/>
<rect x="1708" y="545" width="58" height="22" fill="#6a4c34"/>

</g>
</svg>

<!-- controls -->
<div id="ctrl" class="a"></div>
<svg class="a" style="left:0;top:946px" width="1920" height="84" viewBox="0 946 1920 84">
<rect x="10" y="953" width="1261" height="3" fill="#976bfb"/>
<rect x="1271" y="953" width="639" height="3" fill="#3e3556"/>
<text x="13.5" y="982" font-family="Liberation Sans" font-size="14" fill="#9a9a9a" textLength="53.5" lengthAdjust="spacingAndGlyphs">00:31:50</text>
<text x="1853.6" y="982" font-family="Liberation Sans" font-size="14" fill="#9a9a9a" textLength="53.5" lengthAdjust="spacingAndGlyphs">00:48:19</text>
<g fill="none" stroke="#7e7e7e" stroke-width="1.3" stroke-linejoin="round" stroke-linecap="round">
<rect x="15.8" y="994.7" width="18.4" height="18.6" rx="1"/>
<path d="M20.3,998.4 H30 M20.3,1002 H30 M20.3,1005.7 H30 M20.3,1009.5 H30"/>
<rect x="51.5" y="995.9" width="23" height="16" rx="2"/>
<path d="M63,999.2 V1008.4 M57.6,1004.2 L63,1008.6 L68.4,1004.2"/>
<path d="M90,995.9 H110.8 Q112.2,995.9 112.2,997.3 V1010.6 Q112.2,1012 110.8,1012 H104.6 Q103.2,1012 102.4,1010.8 L101,1008.6 Q100.2,1007.6 99.4,1008.6 L98,1010.8 Q97.2,1012 95.8,1012 H89.8 Q88.4,1012 88.4,1010.6 V997.3 Q88.4,995.9 89.8,995.9 Z"/>
<circle cx="94.4" cy="1003.2" r="2.6"/><circle cx="105.6" cy="1003.2" r="2.6"/>
<path d="M138,993.4 L147.4,997.9 V1010.4 L138,1014.6 L128.4,1010.4 V997.9 Z M128.6,998 L138,1002.4 L147.2,998 M138,1002.4 V1014.4"/>
<path d="M138,996.5 V997.5 M138,999.5 V1000 M130.5,1008 L136,1004 M145.5,1008 L140,1004" stroke-dasharray="1.2 1.5" stroke-width="1"/>
<path d="M162.8,999 V995.4 H170.5 M179.5,995.4 H187.4 V999 M187.4,1008.6 V1012.4 H179.5 M170.5,1012.4 H162.8 V1008.6" stroke-width="1.6" stroke-linecap="butt"/>
<circle cx="174.9" cy="1004" r="2.7"/>
<path d="M844.5,983.8 L852.6,995.4 H836.4 Z"/>
<rect x="836.4" y="998.6" width="16.2" height="4.4" rx="1"/>
<rect x="889.4" y="983.6" width="3" height="19.5" rx="1"/>
<path d="M894.5,993.3 L909.4,985.2 V1001.6 Z"/>
<path d="M946,979.2 Q946,978 947.2,978.7 L972.4,992.6 Q973.4,993.3 972.4,994 L947.2,1007.9 Q946,1008.6 946,1007.4 Z"/>
<path d="M1010.4,985.2 L1025.6,993.3 L1010.4,1001.6 Z"/>
<rect x="1027.6" y="983.6" width="3" height="19.5" rx="1"/>
<rect x="1067.2" y="985.4" width="16.6" height="16.4"/>
<rect x="1697" y="995.8" width="24" height="16.5" rx="2"/>
<rect x="1734" y="995.8" width="24" height="16.5" rx="2"/>
<path d="M1738.5,1004 H1743 M1745,1004 H1753.5 M1738.5,1008 H1750 M1751.5,1008 H1753.5" stroke-width="1.1"/>
<path d="M1772.5,1000.5 V1006.5 M1775,998.5 V1008.5 M1778.5,995.8 V1011.3 M1782,998 V1009 M1784.8,1000.5 V1006.5 M1788,999.5 V1008 M1791,1002.5 V1005 M1796,1003.3 V1004.3" stroke-width="1.2"/>
<path d="M1807,999.5 H1810.5 L1816.5,995.5 Q1818,994.8 1818,996.3 V1011.7 Q1818,1013.2 1816.5,1012.5 L1810.5,1008.5 H1807 Q1805,1008.5 1805,1006.5 V1001.5 Q1805,999.5 1807,999.5 Z"/>
<path d="M1821,996.5 Q1824,1004 1821,1011.5 M1823.8,995.3 Q1827.5,1004 1823.8,1012.7" stroke-width="1.1"/>
</g>
<text x="1701" y="1009" font-family="Liberation Sans" font-size="11" fill="#7e7e7e" textLength="16" lengthAdjust="spacingAndGlyphs">H W</text>
<rect x="1832" y="1002" width="60.5" height="3.3" fill="#976bfb"/>
<rect x="1892.5" y="1002" width="14.5" height="3.3" fill="#3e3556"/>
</svg>
<!-- taskbar -->
<div id="task" class="a"></div>
<svg class="a" style="left:0;top:1030px" width="1920" height="50" viewBox="0 1030 1920 50">
<path d="M20,1047.3 L28.2,1046.2 V1054.5 H20 Z M29,1046.1 L40.1,1044.8 V1054.5 H29 Z M20,1055.2 H28.2 V1063.7 L20,1062.8 Z M29,1055.2 H40.1 V1064.9 L29,1063.8 Z" fill="#000"/>
<g fill="none" stroke="#000" stroke-width="1.1">
<circle cx="92.8" cy="1051.8" r="6.3"/>
<path d="M88.3,1056.6 L80.4,1064.6"/>
<path d="M140.2,1045 V1047.4 H152.8 V1045 M140.2,1063.8 V1061.4 H152.8 V1063.8 M140.2,1050.6 H152.8 V1058.1 H140.2 Z M158.4,1045 V1063.8"/>
</g>
<rect x="157.3" y="1051.2" width="2.2" height="2.4" fill="#000"/>
<!-- edge -->
<defs>
<linearGradient id="edg1" x1="0" y1="0" x2="1" y2="1"><stop offset="0" stop-color="#2fb8e8"/><stop offset="0.6" stop-color="#2a9ad8"/><stop offset="1" stop-color="#54d46a"/></linearGradient>
<linearGradient id="edg2" x1="0" y1="0" x2="0" y2="1"><stop offset="0" stop-color="#1a86d6"/><stop offset="1" stop-color="#0c5aa6"/></linearGradient>
<radialGradient id="chr" cx="0.5" cy="0.5" r="0.5"><stop offset="0" stop-color="#fff"/></radialGradient>
</defs>
<path d="M199,1054.5 Q199.5,1040 214,1039.8 Q227,1040 229.2,1052 Q229.5,1058 224,1059.5 Q219,1060 216.5,1057 Q221,1055 219,1051 Q215,1047 209,1049 Q203,1052 204,1059 Q205,1067 214,1069.8 Q204,1069 200.5,1061 Z" fill="url(#edg1)"/>
<path d="M204,1059 Q203,1052 209,1049 Q215,1047 219,1051 Q221,1055 216.5,1057 Q213,1058.5 212.5,1062 Q213,1068 222,1067.5 Q225,1067 227,1066 Q222,1070 214,1069.8 Q205,1067 204,1059 Z" fill="url(#edg2)"/>
<path d="M216.5,1057 Q219,1060 224,1059.5 Q229.5,1058 229.2,1052 Q228,1046 222,1043 Q229,1050 224,1055 Q220,1057 216.5,1057Z" fill="#4fd372"/>
<rect x="189" y="1077" width="51" height="3" fill="#d08a2c"/>
<!-- ccleaner -->
<path d="M290.5,1046 Q286,1041 278,1041 Q264,1042 262,1055 Q262,1067 276,1068 Q285,1068 291,1062.5 L285.5,1057.5 Q282,1061 277.5,1060.5 Q270,1060 270,1054.5 Q270.5,1049 277,1048 Q282,1048 285,1051 Z" fill="#d8362b"/>
<path d="M281,1043 L274,1057 L276.5,1058.5 L283,1044 Z" fill="#2a6fc9"/>
<path d="M266,1058 Q270,1054 276,1057.5 Q278,1061 275,1067 Q268,1068 262,1066 Q264,1061 266,1058 Z" fill="#eacf9e"/>
<!-- explorer -->
<path d="M323.8,1044.5 Q323.8,1043.3 325,1043.3 H332 L334,1045.2 H350.2 Q351.4,1045.2 351.4,1046.4 V1063.5 Q351.4,1064.7 350.2,1064.7 H325 Q323.8,1064.7 323.8,1063.5 Z" fill="#f7cf54"/>
<path d="M323.8,1044.5 Q323.8,1043.3 325,1043.3 H332 L334,1046.5 H323.8 Z" fill="#e1a61c"/>
<path d="M323.8,1047.5 H351.4 V1063.5 Q351.4,1064.7 350.2,1064.7 H325 Q323.8,1064.7 323.8,1063.5 Z" fill="#fbd867"/>
<path d="M329,1065.6 V1056 Q329,1055 330,1055 H346.2 Q347.2,1055 347.2,1056 V1065.6 H343.2 V1059 H333 V1065.6 Z" fill="#2f8be0"/>
<rect x="313" y="1077" width="51" height="3" fill="#d08a2c"/>
<!-- mail -->
<path d="M385,1049.5 L400,1041 L414.8,1049.5 V1068.8 H385 Z" fill="#0a64c2"/>
<path d="M388,1049.5 H411.8 L400,1058 Z" fill="#f2f2f2"/>
<path d="M385,1051 L400,1060 L414.8,1051 V1068.8 H385 Z" fill="#30a8ef"/>
<path d="M385,1051 L400,1060 L405,1057 L414.8,1068.8 H385 Z" fill="#1d8fe1"/>
<!-- dropbox -->
<path d="M454.5,1041.7 L447,1046.6 L454.5,1051.5 L447,1056.4 L454.5,1061.3 L461.9,1056.4 L469.3,1061.3 L476.9,1056.4 L469.3,1051.5 L476.9,1046.6 L469.3,1041.7 L461.9,1046.6 Z M461.9,1046.6 L469.3,1051.5 L461.9,1056.4 L454.5,1051.5 Z M454.5,1062.7 L461.9,1067.5 L469.3,1062.7 L461.9,1057.8 Z" fill="#000" fill-rule="evenodd"/>
<!-- skype -->
<circle cx="524.2" cy="1054.8" r="13" fill="#1a9be2"/>
<circle cx="516" cy="1046.5" r="5.8" fill="#16a8ec"/>
<circle cx="532.3" cy="1063" r="5.8" fill="#0f80d6"/>
<text x="517" y="1062.5" font-family="Liberation Sans" font-weight="bold" font-size="21" fill="#fff">S</text>
<!-- orange S -->
<rect x="571" y="1040" width="30" height="30" fill="#cc8529"/>
<path d="M588.6,1045.3 L581,1053.2 L587,1056 L582.2,1064.8 L590.4,1056.2 L584.6,1053 Z" fill="#fff"/>
<!-- chrome -->
<circle cx="647.7" cy="1054.7" r="13.8" fill="#1e9e52"/>
<path d="M647.7,1054.7 L636,1047.8 A13.8,13.8 0 0 1 659.6,1047.8 Z" fill="#dc4a3b"/>
<path d="M647.7,1054.7 L659.6,1047.8 A13.8,13.8 0 0 1 647.7,1068.5 Z" fill="#fbc932"/>
<circle cx="647.7" cy="1054.7" r="6.7" fill="#fff"/>
<circle cx="647.7" cy="1054.7" r="5.3" fill="#4b8bf5"/>
<!-- word -->
<rect x="701.9" y="1041.2" width="22.1" height="7.2" fill="#41a5ee"/>
<rect x="701.9" y="1048.4" width="22.1" height="6.8" fill="#2b7cd3"/>
<rect x="701.9" y="1055.2" width="22.1" height="6.8" fill="#185abd"/>
<rect x="701.9" y="1062" width="22.1" height="6.3" rx="0.5" fill="#103f91"/>
<rect x="695.1" y="1047.4" width="15.1" height="14.8" rx="1" fill="#185abd"/>
<text x="696.8" y="1059.5" font-family="Liberation Sans" font-weight="bold" font-size="11.5" fill="#fff">W</text>
<rect x="685" y="1077" width="51" height="3" fill="#d08a2c"/>
<!-- IE -->
<path d="M783.3,1055.5 A11.5,11.5 0 1 0 779.5,1064.5" fill="none" stroke="#3cc0ee" stroke-width="4.6"/>
<rect x="761" y="1053.2" width="22.5" height="4" fill="#3cc0ee"/>
<path d="M761.5,1066.5 Q753,1062 764,1049.5 Q777,1037 786,1040.5 Q789.5,1044 783.5,1050.5" fill="none" stroke="#f3c030" stroke-width="2.2"/>
<!-- kmp highlight -->
<rect x="804" y="1030" width="40" height="47" fill="#e8e3a1"/>
<rect x="844" y="1030" width="21" height="47" fill="#dcdcdc"/>
<rect x="804" y="1077" width="61" height="3" fill="#f8e900"/>
<rect x="819" y="1039.8" width="30" height="29.9" rx="3" fill="#6723c9"/>
<path d="M842,1048 V1062.2 L833.5,1055.1 Z" fill="#9c7ce9"/>
<path d="M825.3,1048.1 V1062.2 L837.5,1055.2 Z" fill="#fff"/>
<!-- tray -->
<circle cx="1577.1" cy="1056.2" r="13" fill="#fff"/>
<circle cx="1577.1" cy="1056.2" r="11.4" fill="#1e93d2"/>
<text x="1570.2" y="1064" font-family="Liberation Sans" font-weight="bold" font-size="19" fill="#fff">?</text>
<circle cx="1587.6" cy="1063" r="6.4" fill="#7a8a92"/>
<circle cx="1587.1" cy="1062.5" r="6" fill="#fff"/>
<circle cx="1587.1" cy="1062.5" r="5" fill="#1e93d2"/>
<rect x="1586.4" y="1061" width="1.6" height="5" fill="#fff"/><rect x="1586.4" y="1058.6" width="1.6" height="1.5" fill="#fff"/>
<g fill="none" stroke="#000" stroke-width="1.1">
<path d="M1604.2,1058.8 L1612.1,1050.8 L1619.8,1058.8"/>
<rect x="1635.5" y="1050.9" width="15" height="9.5"/>
<path d="M1634.2,1053.5 V1061 M1632.5,1048 V1051 M1635.8,1048 V1051"/>
<rect x="1662.9" y="1047.8" width="18.6" height="11.5"/>
<path d="M1672.2,1059.3 V1062 M1669,1062.4 H1675.8 M1664.2,1052 V1062.8 M1662.9,1052 H1667.5 V1047.8"/>
<path d="M1692.5,1051.7 H1694.5 L1698.6,1048.2 V1061.8 L1694.5,1058.3 H1692.5 Z"/>
<path d="M1702.3,1051.4 L1709.8,1058.6 M1709.8,1051.4 L1702.3,1058.6"/>
</g>
<rect x="1637" y="1052.4" width="12" height="6.6" fill="#000"/>
<rect x="1650.5" y="1053.8" width="1.6" height="3.6" fill="#000"/>
<path d="M1632,1050.5 H1637.5 V1052.5 Q1637.5,1054 1634.8,1054 Q1632,1054 1632,1052.5 Z" fill="#000"/>
<text x="1727" y="1060.6" font-family="Liberation Sans" font-size="14.3" fill="#111" textLength="26" lengthAdjust="spacingAndGlyphs">TUR</text>
<text x="1790" y="1048.9" font-family="Liberation Sans" font-size="14.3" fill="#111" textLength="34.5" lengthAdjust="spacingAndGlyphs">21:39</text>
<text x="1770.3" y="1071.7" font-family="Liberation Sans" font-size="14.3" fill="#111" textLength="74" lengthAdjust="spacingAndGlyphs">08/04/2021</text>
<path d="M1868.7,1045 H1889 V1062.1 H1875 L1871,1066 V1062.1 H1868.7 Z" fill="#000"/>
<path d="M1872,1049.3 H1885.5 M1872,1053 H1885.5 M1872,1056.6 H1881" stroke="#fff" stroke-width="1"/>
<circle cx="1888.5" cy="1064.6" r="9.8" fill="#d4d4d4" stroke="#8a8a8a" stroke-width="1"/>
<text x="1884.6" y="1069.8" font-family="Liberation Sans" font-size="14" fill="#000">1</text>
<rect x="1914" y="1030" width="1" height="50" fill="#a9b3ba"/>
</svg>
</body></html>
